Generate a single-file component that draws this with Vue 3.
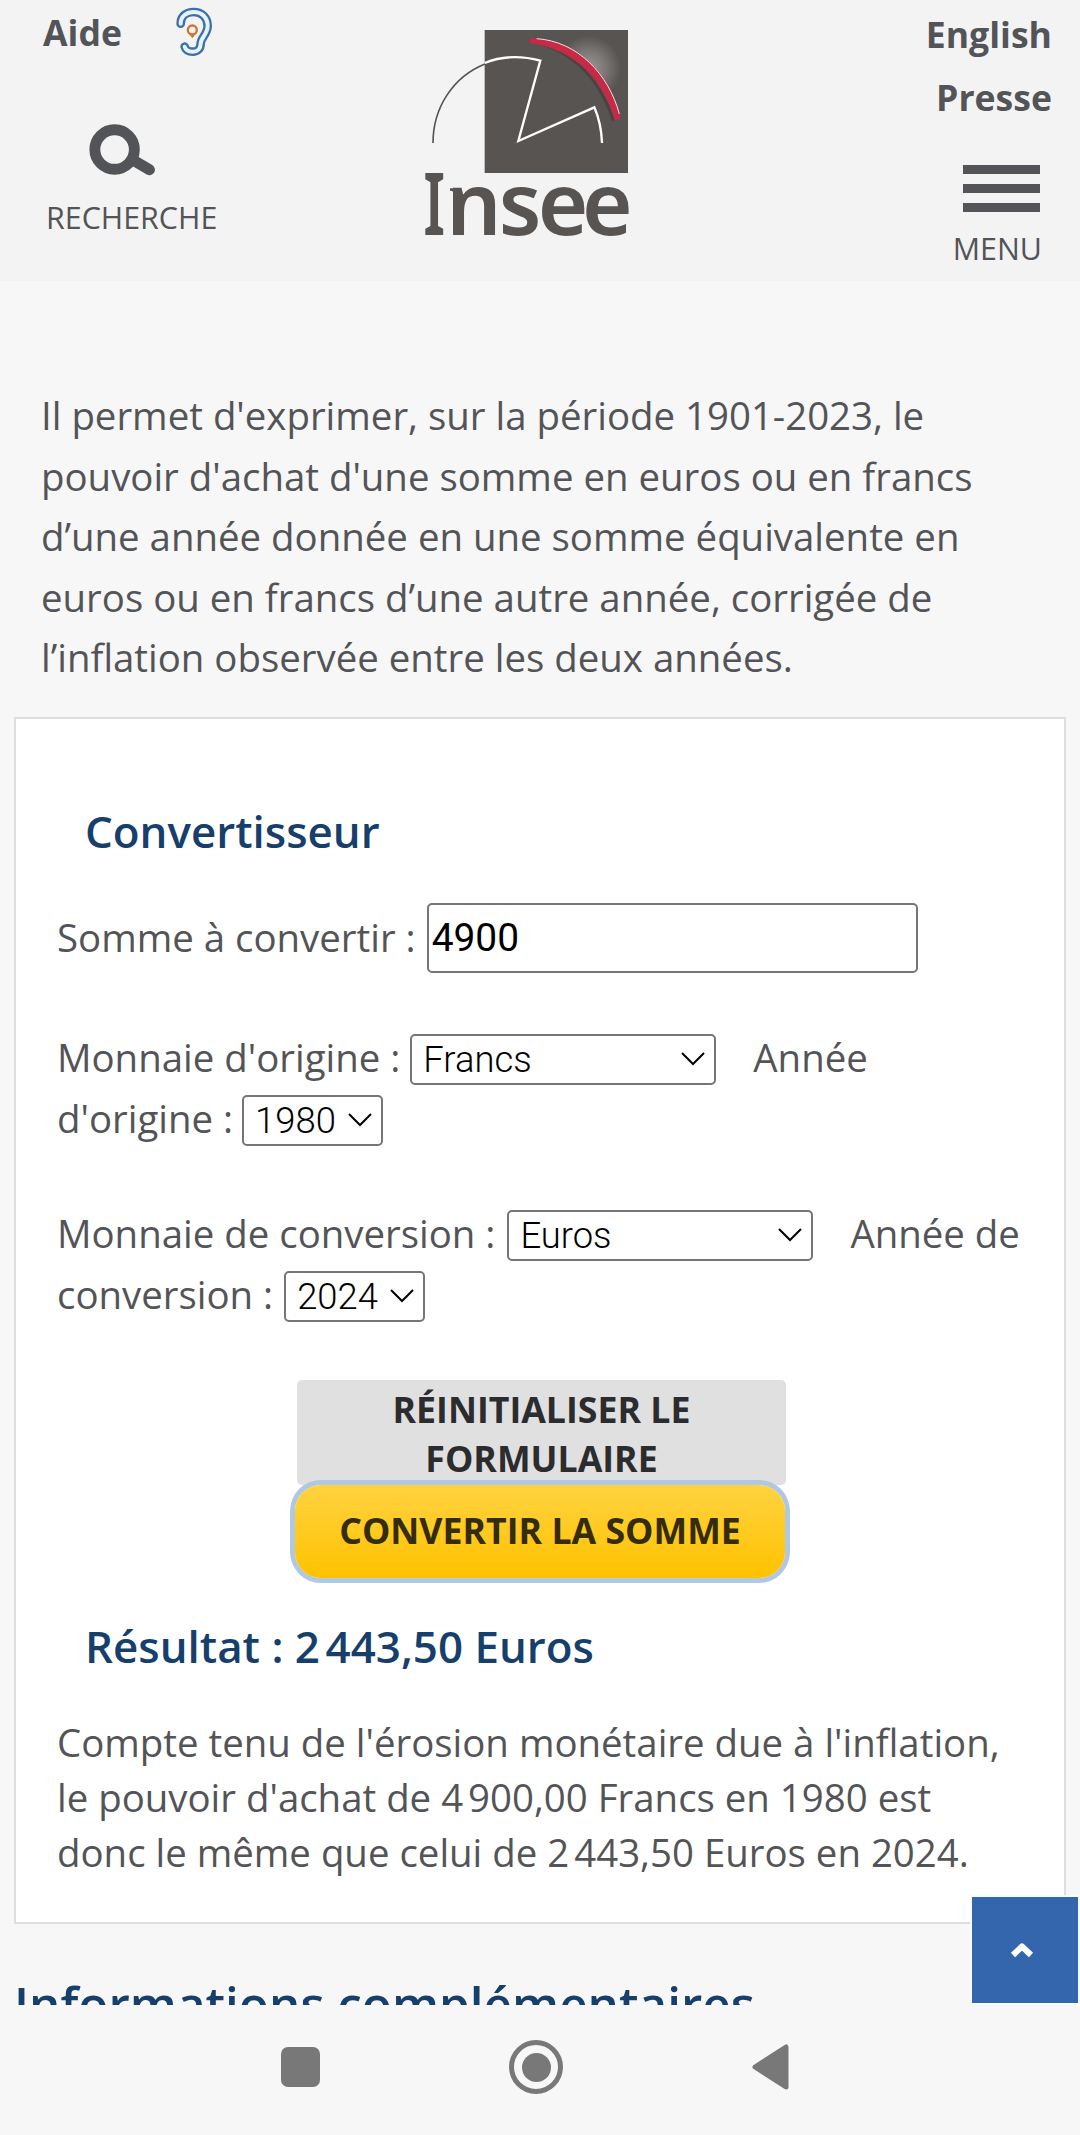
<!--
  App.vue

  Page mobile du convertisseur franc-euro : en-tête, texte
  d'introduction, formulaire de conversion et résultat.
-->
<template>
  <div class="screen">
    <div class="page">
      <header class="site-header">
        <div class="header-left">
          <div class="help-row">
            <a class="top-link">Aide</a>
            <svg class="ear-icon" viewBox="524 20 111 150" fill="none" stroke-linecap="round">
              <path :d="earPath" stroke="#3f6fa8" stroke-width="26" />
              <path :d="earPath" stroke="#e6f4ff" stroke-width="12" />
              <path d="M561 97 L573 114 L585 97 Z" fill="#cf7430" />
              <circle cx="573" cy="89" r="13.5" fill="#f5f3f1" stroke="#cf7430" stroke-width="7" />
            </svg>
          </div>
          <div class="search">
            <svg class="search-icon" viewBox="266 371 202 158" fill="none" stroke="#535457" stroke-width="33">
              <circle cx="343" cy="448.500" r="60" />
              <path d="M400 481 L449 510" stroke-linecap="round" />
            </svg>
            <span class="icon-label search-label">RECHERCHE</span>
          </div>
        </div>

        <svg class="logo" viewBox="0 0 780 780" fill="none">
          <defs>
            <radialGradient id="glow" gradientUnits="userSpaceOnUse" cx="565" cy="205" r="98">
              <stop offset="0" stop-color="#9a9795" />
              <stop offset="0.5" stop-color="#7c7977" />
              <stop offset="1" stop-color="#585452" />
            </radialGradient>
          </defs>
          <rect x="254" y="90" width="430" height="429" fill="#585452" />
          <path d="M388 115 C530 115 630 220 662 355 L684 300 L684 100 L500 100 Z" fill="url(#glow)" />
          <path d="M388 122 C520 150 600 240 640 362" stroke="#3d3030" stroke-width="8" opacity="0.5" />
          <path d="M388 115 C530 115 630 220 662 355 L645 361 C610 240 530 150 388 128 Z" fill="#c62a47" />
          <path d="M410 116 C532 124 626 222 658 342" stroke="#f6dfe3" stroke-width="3" />
          <path d="M99 429 C99 322 160 230 255 192" stroke="#585452" stroke-width="5" />
          <path d="M254 189 C308 167 365 167 421 182 L355 423 L583 322 Q604 370 606 429" stroke="#ffffff" stroke-width="7" />
          <text class="logo-text" y="705">
            <tspan x="70" textLength="66" lengthAdjust="spacingAndGlyphs">I</tspan><tspan x="139 296 413 546">nsee</tspan>
          </text>
          <path d="M150 565 H178 V580 H163 Q161 573 150 572 Z" fill="#585452" />
        </svg>

        <div class="header-right">
          <a class="top-link">English</a>
          <a class="top-link">Presse</a>
          <div class="burger">
            <span v-for="n in 3" :key="n" class="burger-bar"></span>
          </div>
          <span class="icon-label menu-label">MENU</span>
        </div>
      </header>

      <p class="intro">
        Il permet d'exprimer, sur la période 1901-2023, le<br />
        pouvoir d'achat d'une somme en euros ou en francs<br />
        d’une année donnée en une somme équivalente en<br />
        euros ou en francs d’une autre année, corrigée de<br />
        l’inflation observée entre les deux années.
      </p>

      <main class="card">
        <h2 class="title">Convertisseur</h2>

        <div class="amount-row">
          <label for="amount">Somme à convertir :</label>
          <input id="amount" v-model="amount" class="amount-input" type="text" />
        </div>

        <div v-for="group in groups" :key="group.id" class="group">
          <div v-for="(line, i) in group.lines" :key="i" class="field-line">
            <span>{{ line.label }}</span>
            <div class="select-box" :class="line.size">
              <select v-model="line.value">
                <option v-for="opt in line.options" :key="opt">{{ opt }}</option>
              </select>
              <svg class="chevron" viewBox="0 0 24 14" fill="none" stroke="#000" stroke-width="2">
                <path d="M1 1 L12 12 L23 1" />
              </svg>
            </div>
            <span v-if="line.after" class="after">{{ line.after }}</span>
          </div>
        </div>

        <div class="buttons">
          <button class="btn btn-reset" type="button">RÉINITIALISER LE<br />FORMULAIRE</button>
          <button class="btn btn-convert" type="button">CONVERTIR LA SOMME</button>
        </div>

        <h2 class="title result-title">Résultat : 2&#8239;443,50 Euros</h2>
        <p class="result-text">
          Compte tenu de l'érosion monétaire due à l'inflation,<br />
          le pouvoir d'achat de 4&#8239;900,00 Francs en 1980 est<br />
          donc le même que celui de 2&#8239;443,50 Euros en 2024.
        </p>
      </main>

      <h2 class="more-title">Informations complémentaires</h2>

      <a class="to-top">
        <svg viewBox="0 0 24 16" fill="none" stroke="#ffffff" stroke-width="6">
          <path d="M3 13 L12 4.500 L21 13" stroke-linejoin="round" />
        </svg>
      </a>
    </div>

    <!-- Barre de navigation du téléphone -->
    <nav class="system-bar">
      <span class="nav-square"></span>
      <span class="nav-home"></span>
      <svg class="nav-back" viewBox="0 0 37 46">
        <path d="M3 23 L34 3 L34 43 Z" fill="#787878" stroke="#787878" stroke-width="5" stroke-linejoin="round" />
      </svg>
    </nav>
  </div>
</template>

<script setup>
import { ref } from 'vue';

const earPath =
  'M538 70 C538 47 556 35 577 35 C603 35 619 53 619 77 C619 102 598 112 598 130 C598 145 589 154 574 154 C561 154 552 148 550 139';

const amount = ref('4900');

const currencies = ['Francs', 'Euros'];

const groups = ref([
  {
    id: 'origine',
    lines: [
      { label: "Monnaie d'origine :", value: 'Francs', options: currencies, size: 'wide', after: 'Année' },
      { label: "d'origine :", value: '1980', options: ['1980'], size: 'narrow' }
    ]
  },
  {
    id: 'conversion',
    lines: [
      { label: 'Monnaie de conversion :', value: 'Euros', options: currencies, size: 'wide', after: 'Année de' },
      { label: 'conversion :', value: '2024', options: ['2024'], size: 'narrow' }
    ]
  }
]);
</script>

<style>
body {
  background: #f7f7f7;
}
</style>

<style scoped>
* {
  box-sizing: border-box;
}

.screen {
  width: 1080px;
  height: 2135px;
  overflow: hidden;
  background: #f7f7f7;
  color: #535457;
  font-family: "Open Sans", sans-serif;
  font-size: 38.4px;
}

.page {
  position: relative;
  height: 2005px;
  overflow: hidden;
}

/* En-tête */
.site-header {
  display: grid;
  grid-template-columns: 400px 260px 420px;
  height: 281px;
  background: #f3f3f3;
}

.top-link {
  font-size: 35.6px;
  font-weight: 700;
  line-height: 63px;
}

.help-row {
  display: flex;
  align-items: center;
  gap: 54px;
  height: 64px;
  padding-left: 43px;
}

.ear-icon {
  width: 37px;
  height: 50px;
}

.search {
  display: flex;
  flex-direction: column;
  padding: 60px 0 0 46px;
}

.search-icon {
  width: 67px;
  height: 52px;
  margin-left: 43px;
}

.icon-label {
  font-size: 30.4px;
  line-height: 40px;
}

.search-label {
  margin-top: 22px;
}

.logo {
  width: 260px;
  height: 260px;
}

.logo-text {
  font-family: "Noto Sans", sans-serif;
  font-size: 260px;
  font-weight: 600;
  fill: #585452;
}

.header-right {
  display: flex;
  flex-direction: column;
  align-items: flex-end;
  padding: 3px 28px 0 0;
}

.burger {
  display: flex;
  flex-direction: column;
  gap: 10px;
  width: 77px;
  margin: 36px 12px 0 0;
}

.burger-bar {
  height: 9px;
  background: #535457;
}

.menu-label {
  margin: 17px 10px 0 0;
}

.intro {
  margin: 104px 0 0 41px;
  line-height: 60.5px;
  white-space: nowrap;
}

/* Formulaire */
.card {
  width: 1052px;
  height: 1207px;
  margin: 29px 0 0 14px;
  padding: 82px 0 0 41px;
  border: 2px solid #dedede;
  background: #ffffff;
  white-space: nowrap;
}

.title {
  margin: 0 0 0 28px;
  color: #173f6b;
  font-size: 43.9px;
  font-weight: 600;
  line-height: 61px;
}

.amount-row {
  display: flex;
  gap: 11px;
  margin-top: 41px;
  line-height: 69px;
}

.amount-input {
  width: 491px;
  height: 70px;
  padding: 0 3px;
  border: 2px solid #767676;
  border-radius: 5px;
  background: #ffffff;
  color: #000000;
  font-family: Roboto, sans-serif;
  font-size: 38.9px;
}

.group {
  margin-top: 53px;
}

.group + .group {
  margin-top: 54px;
}

.field-line {
  display: flex;
  height: 61px;
  line-height: 62px;
}

.select-box {
  display: grid;
  height: 51px;
  margin: 8px 0 0 10px;
}

.select-box > * {
  grid-area: 1 / 1;
}

.select-box.wide {
  width: 306px;
}

.select-box.narrow {
  width: 141px;
  margin-left: 9px;
}

.group + .group .wide {
  margin-left: 12px;
}

.group + .group .narrow {
  margin-left: 11px;
}

select {
  width: 100%;
  padding: 0 11px;
  appearance: none;
  border: 2px solid #767676;
  border-radius: 5px;
  background: #ffffff;
  color: #000000;
  font-family: Roboto, sans-serif;
  font-size: 36.4px;
  font-weight: 300;
}

.chevron {
  place-self: center end;
  width: 24px;
  height: 14px;
  margin-right: 11px;
}

.after {
  margin-left: 37px;
}

.buttons {
  width: 489px;
  margin: 56px 0 0 240px;
}

.btn {
  display: block;
  width: 100%;
  padding: 0;
  border: 0;
  color: #2b2c2e;
  font-family: inherit;
  font-size: 35.7px;
  font-weight: 700;
  line-height: 49px;
}

.btn-reset {
  height: 105px;
  padding-top: 3px;
  border-radius: 5px;
  background: #e0e0e0;
}

.btn-convert {
  width: 490px;
  height: 93px;
  margin-left: -2px;
  padding-bottom: 2px;
  border-radius: 26px;
  background: linear-gradient(#ffd340, #ffc200);
  box-shadow: 0 0 0 5px #b0c8e2;
  color: #352c0c;
}

.result-title {
  margin-top: 38px;
}

.result-text {
  margin: 38px 0 0;
  line-height: 55px;
}

.more-title {
  margin: 50px 0 0 14px;
  color: #173f6b;
  font-size: 49.4px;
  font-weight: 600;
  line-height: 60px;
  white-space: nowrap;
}

/* Bouton de retour en haut, flottant au-dessus de la page */
.to-top {
  position: absolute;
  right: 0;
  bottom: 0;
  display: flex;
  align-items: center;
  justify-content: center;
  width: 110px;
  height: 110px;
  padding-right: 6px;
  border: 2px solid #fafafa;
  background: #3466ae;
}

.to-top svg {
  width: 24px;
  height: 16px;
}

/* Barre système */
.system-bar {
  display: flex;
  align-items: center;
  height: 130px;
  padding: 0 0 6px 281px;
}

.nav-square {
  width: 39px;
  height: 40px;
  border-radius: 7px;
  background: #787878;
}

.nav-home {
  display: grid;
  place-items: center;
  width: 54px;
  height: 54px;
  margin: 0 189px;
  border: 5px solid #787878;
  border-radius: 50%;
}

.nav-home::before {
  content: "";
  width: 29px;
  height: 29px;
  border-radius: 50%;
  background: #787878;
}

.nav-back {
  width: 37px;
  height: 46px;
}
</style>
